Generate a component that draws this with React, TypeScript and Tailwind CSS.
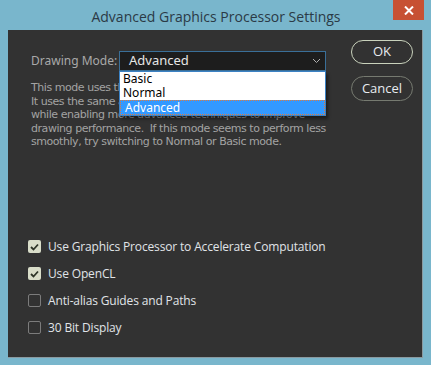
export default function App() {
  const desc = [
    "This mode uses the most GPU memory and supports",
    "It uses the same amount of GPU memory as Normal",
    "while enabling more advanced techniques to improve",
    "drawing performance.  If this mode seems to perform less",
    "smoothly, try switching to Normal or Basic mode.",
  ];
  const options = [
    { label: "Use Graphics Processor to Accelerate Computation", checked: true },
    { label: "Use OpenCL", checked: true },
    { label: "Anti-alias Guides and Paths", checked: false },
    { label: "30 Bit Display", checked: false },
  ];

  return (
    <div className="w-[431px] h-[365px] bg-[#79b6cc] flex flex-col font-['Open_Sans',sans-serif]">
      {/* Title bar */}
      <div className="relative h-[30px] flex items-center justify-center">
        <span className="text-[14px] text-[#2b3a46] mt-[2px] ml-[1px]">Advanced Graphics Processor Settings</span>
        <div className="absolute top-0 right-[7px] w-[31px] h-[20px] bg-[#c75133] flex items-center justify-center">
          <svg width="10" height="9" viewBox="0 0 10 9">
            <path d="M1 0.5 L9 8.5 M9 0.5 L1 8.5" stroke="#fff" strokeWidth="2" />
          </svg>
        </div>
      </div>

      {/* Content */}
      <div className="flex-1 mx-[8px] mb-[7px] bg-[#323232] border-r border-b border-[#8a9aa0] flex">
        <div className="flex-1 flex flex-col pl-[23px] pt-[21px] pb-[23px]">
          <div className="flex items-center h-[20px] relative">
            <span className="w-[88px] text-[12px] text-[#a9a9a9] font-['Noto_Sans',sans-serif]">Drawing Mode:</span>
            <div className="w-[207px] h-[20px] bg-[#1d1d1d] border border-[#3a6f98] flex items-center justify-between pl-[9px] pr-[4px]">
              <span className="text-[13px] text-[#e6e6e6] font-['Noto_Sans',sans-serif]">Advanced</span>
              <svg width="9" height="6" viewBox="0 0 9 6">
                <path d="M1 1 L4.5 4.5 L8 1" stroke="#b0b0b0" strokeWidth="1" fill="none" />
              </svg>
            </div>
            <div className="absolute left-[88px] top-[20px] w-[207px] bg-white border border-[#3c82c4] shadow-[2px_3px_3px_rgba(0,0,0,0.45)] font-['Noto_Sans',sans-serif] text-[12px] text-black leading-[14px]">
              <div className="h-[14px] pl-[3px]">Basic</div>
              <div className="h-[14px] pl-[3px]">Normal</div>
              <div className="h-[15px] pl-[4px] bg-[#3399ff] text-white border border-dotted border-[#e07a3a]">Advanced</div>
            </div>
          </div>

          <div className="mt-[10px] text-[11px] leading-[13.5px] text-[#a3a3a3] font-['DejaVu_Sans',sans-serif] tracking-[-0.45px]">
            {desc.map((l) => (
              <div key={l} className="whitespace-pre">{l}</div>
            ))}
          </div>

          <div className="mt-auto flex flex-col gap-[14px]">
            {options.map((o) => (
              <div key={o.label} className="flex items-center h-[13px]">
                <div
                  className={
                    o.checked
                      ? "w-[13px] h-[13px] rounded-[2px] bg-[#d9ddc9] flex items-center justify-center ml-[-3px]"
                      : "w-[13px] h-[13px] rounded-[2px] border border-[#7c7c7c] ml-[-3px]"
                  }
                >
                  {o.checked && (
                    <svg width="9" height="8" viewBox="0 0 9 8">
                      <path d="M1 4 L3.5 6.5 L8 1.5" stroke="#2e3428" strokeWidth="1.8" fill="none" />
                    </svg>
                  )}
                </div>
                <span className="ml-[7px] text-[12px] text-[#e0e4e8] tracking-[-0.15px] font-['Open_Sans',sans-serif]">{o.label}</span>
              </div>
            ))}
          </div>
        </div>

        <div className="w-[72px] flex flex-col items-start pt-[10px] gap-[12px]">
          <div className="w-[62px] h-[24px] rounded-full border border-[#c9d2bc] flex items-center justify-center text-[13px] text-[#e8ecf0] ml-[1px]">
            OK
          </div>
          <div className="w-[62px] h-[25px] rounded-full border border-[#767a70] flex items-center justify-center text-[13px] text-[#e8ecf0] ml-[1px]">
            Cancel
          </div>
        </div>
      </div>
    </div>
  );
}
